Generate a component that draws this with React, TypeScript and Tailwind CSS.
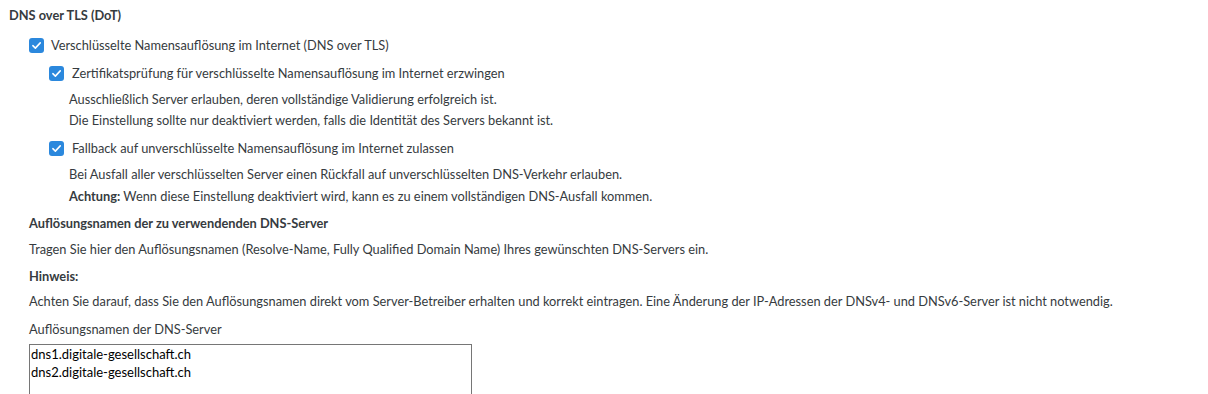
const Check = ({ className = "" }: { className?: string }) => (
  <span
    className={`flex h-[15px] w-[15px] shrink-0 items-center justify-center rounded-[3px] bg-[#2b88dd] ${className}`}
  >
    <svg viewBox="0 0 16 16" className="h-[13px] w-[13px]" fill="none">
      <path d="M3.5 8.2 6.6 11.2 12.6 4.8" stroke="#fff" strokeWidth="1.9" strokeLinecap="round" strokeLinejoin="round" />
    </svg>
  </span>
);

export default function App() {
  return (
    <div
      className="h-[394px] overflow-hidden bg-white pl-[9px] pt-[5px] text-[12.8px] leading-[20px] text-[#363b40]"
      style={{ fontFamily: "Lato, 'Liberation Sans', sans-serif" }}
    >
      <h2 className="font-bold">DNS over TLS (DoT)</h2>

      <div className="ml-[20px]">
        <label className="mt-[10px] flex items-center gap-[7px]">
          <Check />
          <span>Verschlüsselte Namensauflösung im Internet (DNS over TLS)</span>
        </label>

        <div className="ml-[20px]">
          <label className="mt-[8px] flex items-center gap-[8px]">
            <Check />
            <span>Zertifikatsprüfung für verschlüsselte Namensauflösung im Internet erzwingen</span>
          </label>
          <div className="ml-[20px] mt-[6px] leading-[21px]">
            <p>Ausschließlich Server erlauben, deren vollständige Validierung erfolgreich ist.</p>
            <p>Die Einstellung sollte nur deaktiviert werden, falls die Identität des Servers bekannt ist.</p>
          </div>

          <label className="mt-[7px] flex items-center gap-[8px]">
            <Check />
            <span>Fallback auf unverschlüsselte Namensauflösung im Internet zulassen</span>
          </label>
          <div className="ml-[20px] mt-[5px] leading-[22px]">
            <p>Bei Ausfall aller verschlüsselten Server einen Rückfall auf unverschlüsselten DNS-Verkehr erlauben.</p>
            <p>
              <span className="font-bold">Achtung:</span> Wenn diese Einstellung deaktiviert wird, kann es zu einem vollständigen DNS-Ausfall kommen.
            </p>
          </div>
        </div>

        <h3 className="mt-[6px] font-bold">Auflösungsnamen der zu verwendenden DNS-Server</h3>
        <p className="mt-[6px]">
          Tragen Sie hier den Auflösungsnamen (Resolve-Name, Fully Qualified Domain Name) Ihres gewünschten DNS-Servers ein.
        </p>
        <p className="mt-[7px] font-bold">Hinweis:</p>
        <p className="mt-[5px]">
          Achten Sie darauf, dass Sie den Auflösungsnamen direkt vom Server-Betreiber erhalten und korrekt eintragen. Eine Änderung der IP-Adressen der DNSv4- und DNSv6-Server ist nicht notwendig.
        </p>
        <p className="mt-[8px]">Auflösungsnamen der DNS-Server</p>
        <textarea
          className="mt-[5px] block h-[80px] w-[443px] resize-none border border-[#767676] px-[1px] py-0 text-[13px] leading-[18px] text-black outline-none"
          style={{ fontFamily: "Lato, 'Liberation Sans', sans-serif" }}
          defaultValue={"dns1.digitale-gesellschaft.ch\ndns2.digitale-gesellschaft.ch"}
        />
      </div>
    </div>
  );
}
